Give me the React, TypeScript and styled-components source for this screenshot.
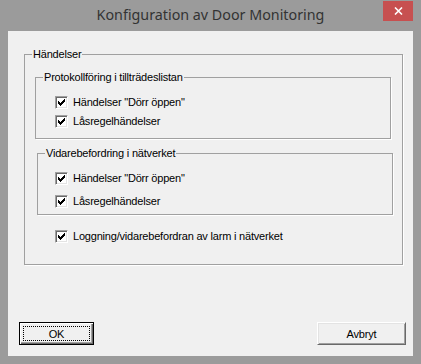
import React from 'react'
import styled, { createGlobalStyle } from 'styled-components'

const GlobalStyle = createGlobalStyle`
  body {
    margin: 0;
    background: #9b9b9b;
  }
`

interface ICheckProps {
  label: string
  gap?: number
  indent?: number
}

function Check(props: ICheckProps): JSX.Element {
  const { label, gap = 0, indent = 0 } = props
  return (
    <Style.CheckRow $gap={gap} $indent={indent}>
      <Style.Box>
        <svg width="7" height="7" viewBox="0 0 7 7" shapeRendering="crispEdges">
          <path d="M6 0h1v3h-1zM5 1h1v3h-1zM4 2h1v3h-1zM3 3h1v3h-1zM2 4h1v3h-1zM1 3h1v3h-1zM0 2h1v3h-1z" fill="#000" />
        </svg>
      </Style.Box>
      <span>{label}</span>
    </Style.CheckRow>
  )
}

export default function App(): JSX.Element {
  return (
    <>
      <GlobalStyle />
      <Style.Window>
        <Style.TitleBar>
          <Style.Title>Konfiguration av Door Monitoring</Style.Title>
          <Style.Close>
            <svg width="9" height="8" viewBox="0 0 9 8">
              <path d="M1 0.5 L8 7.5 M8 0.5 L1 7.5" stroke="#fff" strokeWidth="1.6" />
            </svg>
          </Style.Close>
        </Style.TitleBar>
        <Style.Client>
          <Style.Group $top={17} $left={16} $right={10}>
            <Style.Legend>Händelser</Style.Legend>
            <Style.Body $pad="10px 11px 21px 10px">
              <Style.Group $top={0} $left={0} $right={0}>
                <Style.Legend>Protokollföring i tillträdeslistan</Style.Legend>
                <Style.Body $pad="12px 0 10px 19px">
                  <Check label={'Händelser "Dörr öppen"'} />
                  <Check label="Låsregelhändelser" gap={6} />
                </Style.Body>
              </Style.Group>
              <Style.Group $top={8} $left={2} $right={-2}>
                <Style.Legend>Vidarebefordring i nätverket</Style.Legend>
                <Style.Body $pad="12px 0 6px 17px">
                  <Check label={'Händelser "Dörr öppen"'} />
                  <Check label="Låsregelhändelser" gap={10} />
                </Style.Body>
              </Style.Group>
              <Check label="Loggning/vidarebefordran av larm i nätverket" gap={15} indent={20} />
            </Style.Body>
          </Style.Group>
          <Style.Buttons>
            <Style.Button $default>
              <Style.Focus>OK</Style.Focus>
            </Style.Button>
            <Style.Button $wide>Avbryt</Style.Button>
          </Style.Buttons>
        </Style.Client>
      </Style.Window>
    </>
  )
}

const Style = {
  Window: styled.div`
    width: 421px;
    height: 364px;
    display: flex;
    flex-direction: column;
    background: #9b9b9b;
    font-family: 'Liberation Sans', Arial, sans-serif;
    font-size: 11px;
    letter-spacing: -0.2px;
    color: #000;
  `,
  TitleBar: styled.div`
    height: 31px;
    flex-shrink: 0;
    display: grid;
    grid-template-columns: 1fr auto 1fr;
  `,
  Title: styled.div`
    grid-column: 2;
    font-family: 'Noto Sans', 'Open Sans', sans-serif;
    font-size: 14.3px;
    letter-spacing: 0;
    line-height: 29px;
    color: #333;
    white-space: nowrap;
  `,
  Close: styled.div`
    grid-column: 3;
    justify-self: end;
    width: 30px;
    height: 20px;
    margin-right: 8px;
    margin-top: 1px;
    background: #c75050;
    display: flex;
    align-items: center;
    justify-content: center;
  `,
  Client: styled.div`
    flex: 1;
    margin: 0 8px 8px;
    background: #f0f0f0;
    display: flex;
    flex-direction: column;
  `,
  Group: styled.fieldset<{ $top: number; $left: number; $right: number }>`
    margin: ${({ $top }) => $top}px ${({ $right }) => $right}px 0 ${({ $left }) => $left}px;
    padding: 0;
    min-width: 0;
    border: 1px solid #a0a0a0;
    box-shadow: 1px 1px 0 #fff;
  `,
  Legend: styled.legend`
    margin-left: 7px;
    padding: 0 1px;
    line-height: 13px;
    background: #f0f0f0;
  `,
  Body: styled.div<{ $pad: string }>`
    padding: ${({ $pad }) => $pad};
    display: flex;
    flex-direction: column;
  `,
  CheckRow: styled.div<{ $gap: number; $indent: number }>`
    display: flex;
    align-items: center;
    gap: 5px;
    height: 13px;
    line-height: 13px;
    margin-top: ${({ $gap }) => $gap}px;
    margin-left: ${({ $indent }) => $indent}px;
    white-space: nowrap;
  `,
  Box: styled.span`
    box-sizing: border-box;
    width: 13px;
    height: 13px;
    flex-shrink: 0;
    background: #fff;
    border: 1px solid;
    border-color: #a0a0a0 #fff #fff #a0a0a0;
    box-shadow: inset 1px 1px 0 #696969, inset -1px -1px 0 #e3e3e3;
    display: flex;
    align-items: center;
    justify-content: center;

    svg {
      display: block;
    }
  `,
  Buttons: styled.div`
    margin-top: auto;
    padding: 0 7px 11px 11px;
    display: flex;
    justify-content: space-between;
  `,
  Button: styled.div<{ $default?: boolean; $wide?: boolean }>`
    box-sizing: border-box;
    width: ${({ $wide }) => ($wide ? 89 : 75)}px;
    height: 23px;
    display: flex;
    align-items: center;
    justify-content: center;
    background: #f0f0f0;
    border: 1px solid;
    border-color: ${({ $default }) => ($default ? '#000' : '#fff #696969 #696969 #fff')};
    box-shadow: ${({ $default }) =>
      $default
        ? 'inset 1px 1px 0 #fff, inset -1px -1px 0 #696969, inset -2px -2px 0 #a0a0a0'
        : 'inset 1px 1px 0 #e3e3e3, inset -1px -1px 0 #a0a0a0'};
    padding: ${({ $default }) => ($default ? '3px' : '0')};
  `,
  Focus: styled.span`
    flex: 1;
    align-self: stretch;
    display: flex;
    align-items: center;
    justify-content: center;
    border: 1px dotted #000;
  `,
}
